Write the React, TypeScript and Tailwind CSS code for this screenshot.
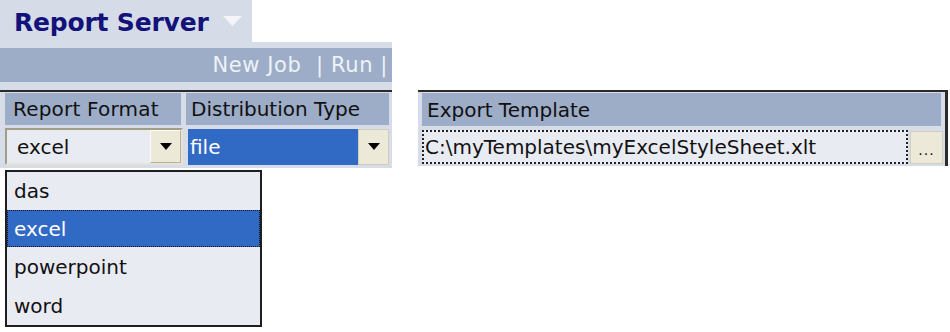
import React from "react";

const font = { fontFamily: '"DejaVu Sans", Verdana, sans-serif' };

function Arrow() {
  return (
    <svg width="12" height="7" viewBox="0 0 12 7">
      <polygon points="0,0 12,0 6,7" fill="#000" />
    </svg>
  );
}

export default function App() {
  return (
    <div className="w-[950px] h-[332px] bg-white flex items-start text-[20px] text-[#111]" style={font}>
      {/* Left panel */}
      <div className="w-[392px] flex flex-col">
        <div className="w-[252px] h-[42px] bg-[#d5dce7] flex items-center pl-[14px] gap-[14px]">
          <span className="text-[25px] font-bold text-[#12127a] leading-none tracking-[-0.2px] pt-[2px]">Report Server</span>
          <svg width="19" height="10" viewBox="0 0 19 10">
            <polygon points="0,0 19,0 9.5,10" fill="#f3f5f9" />
          </svg>
        </div>
        <div className="bg-[#d6dde8] pt-[6px] pb-[8px]">
          <div className="h-[34px] bg-[#9dadc7] flex items-center justify-end pr-[4px] text-[21px] tracking-[0.6px] text-[#eef2f7] whitespace-pre leading-none">
            New Job  | Run |
          </div>
        </div>
        <div className="border-t-2 border-[#2a2a2a] bg-[#d6dde8] pl-[5px] pr-[3px] pt-[1px] pb-[3px]">
          <div className="flex gap-[5px] h-[32px]">
            <div className="w-[176px] bg-[#9dadc7] flex items-center pl-[8px] leading-none tracking-[0.2px]">Report Format</div>
            <div className="flex-1 bg-[#9dadc7] flex items-center pl-[5px] leading-none">Distribution Type</div>
          </div>
          <div className="flex items-center mt-[3px] h-[37px]">
            <div className="w-[178px] h-[37px] flex border-2 border-t-[#a29d88] border-l-[#a29d88] border-b-[#e6e3d6] border-r-[#e6e3d6] bg-[#e9ebf2]">
              <div className="flex-1 flex items-center pl-[10px] leading-none">excel</div>
              <div className="w-[31px] bg-[#ece9d8] border border-t-[#fbfaf4] border-l-[#fbfaf4] border-b-[#b8b29a] border-r-[#b8b29a] flex items-center justify-center">
                <Arrow />
              </div>
            </div>
            <div className="ml-[5px] flex-1 h-[36px] flex">
              <div className="flex-1 bg-[#316ac5] text-white flex items-center pl-[2px] leading-none">file</div>
              <div className="w-[31px] bg-[#ece9d8] border border-[#d0ccb8] flex items-center justify-center">
                <Arrow />
              </div>
            </div>
          </div>
        </div>
        {/* dropdown list */}
        <div className="mt-[2px] ml-[5px] w-[257px] border-2 border-[#1e1e1e] bg-[#e9ebf3] flex flex-col">
          <div className="h-[38px] flex items-center pl-[7px] leading-none">das</div>
          <div className="h-[37px] flex items-center pl-[6px] leading-none bg-[#316ac5] text-white border border-dotted border-[#111]">excel</div>
          <div className="h-[39px] flex items-center pl-[7px] leading-none">powerpoint</div>
          <div className="h-[39px] flex items-center pl-[7px] leading-none">word</div>
        </div>
      </div>

      {/* Right panel */}
      <div className="ml-[26px] mt-[90px] w-[530px] border-t-2 border-r-[3px] border-[#2a2a2a] bg-[#d6dde8] pl-[4px] pr-[2px] pt-[1px] pb-[2px]">
        <div className="h-[33px] bg-[#9dadc7] flex items-center pl-[5px] leading-none mr-[2px]">Export Template</div>
        <div className="flex items-center mt-[4px] h-[34px]">
          <div className="w-[486px] h-[34px] bg-[#e9ebf3] border-2 border-dotted border-[#222] flex items-center pl-[1px] leading-none">
            C:\myTemplates\myExcelStyleSheet.xlt
          </div>
          <div className="ml-[2px] w-[33px] h-[33px] bg-[#ece9d8] border border-[#d3cfbb] flex items-end justify-center pb-[6px] text-[14px] leading-none tracking-[1px]">
            ...
          </div>
        </div>
      </div>
    </div>
  );
}
